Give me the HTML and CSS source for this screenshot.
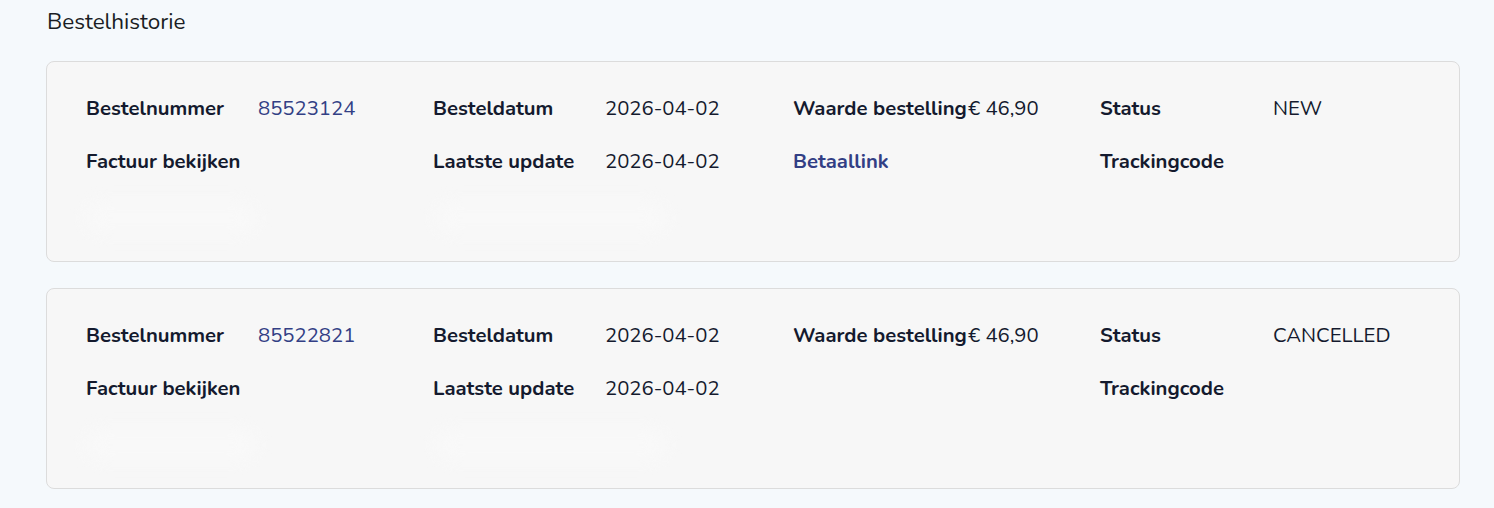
FILE: index.html
```html
<!DOCTYPE html>
<html lang="nl">
<head>
<meta charset="utf-8">
<title>Bestelhistorie</title>
<link rel="stylesheet" href="styles.css">
</head>
<body>
<main class="page">
  <h2 class="title">Bestelhistorie</h2>
  <section class="orders">
    <article class="order">
      <div class="grid">
        <span class="label">Bestelnummer</span>
        <span class="value link">85523124</span>
        <span class="label">Besteldatum</span>
        <span class="value">2026-04-02</span>
        <span class="label">Waarde bestelling</span>
        <span class="value">€ 46,90</span>
        <span class="label">Status</span>
        <span class="value">NEW</span>

        <span class="label">Factuur bekijken</span>
        <span class="value"></span>
        <span class="label">Laatste update</span>
        <span class="value">2026-04-02</span>
        <a class="label link" href="#">Betaallink</a>
        <span class="value"></span>
        <span class="label">Trackingcode</span>
        <span class="value"></span>
      </div>
      <div class="actions"><span class="ghost g1"></span><span class="ghost g2"></span></div>
    </article>
    <article class="order">
      <div class="grid">
        <span class="label">Bestelnummer</span>
        <span class="value link">85522821</span>
        <span class="label">Besteldatum</span>
        <span class="value">2026-04-02</span>
        <span class="label">Waarde bestelling</span>
        <span class="value">€ 46,90</span>
        <span class="label">Status</span>
        <span class="value">CANCELLED</span>

        <span class="label">Factuur bekijken</span>
        <span class="value"></span>
        <span class="label">Laatste update</span>
        <span class="value">2026-04-02</span>
        <span class="label"></span>
        <span class="value"></span>
        <span class="label">Trackingcode</span>
        <span class="value"></span>
      </div>
      <div class="actions"><span class="ghost g1"></span><span class="ghost g2"></span></div>
    </article>
  </section>
</main>
</body>
</html>
```

FILE: styles.css
```css
* { box-sizing: border-box; }
html, body {
  margin: 0;
  padding: 0;
  background: #f5f9fc;
}
body {
  font-family: Nunito, "Lato", "Open Sans", sans-serif;
  color: #111827;
}
.page {
  padding: 7px 34px 0 46px;
}
.title {
  margin: 0 0 0 1px;
  font-size: 22.5px;
  font-weight: 400;
  line-height: 30px;
  color: #1a1d24;
}
.orders {
  margin-top: 24px;
  display: flex;
  flex-direction: column;
  gap: 26px;
}
.order {
  background: #f7f7f7;
  border: 1px solid #dcdcdc;
  border-radius: 8px;
  padding: 33px 39px 20px;
}
.grid {
  display: grid;
  grid-template-columns: 172px 175px 172px 188px 175px 132px 173px auto;
  row-gap: 26px;
}
.label, .value {
  font-size: 20.3px;
  line-height: 27px;
  white-space: nowrap;
}
.label {
  font-weight: 700;
  color: #141a2e;
  text-decoration: none;
}
.value {
  font-weight: 400;
  color: #141a2e;
}
.link {
  color: #333f85;
}
.actions {
  margin-top: 20px;
  height: 46px;
  display: flex;
  align-items: center;
}
.ghost {
  display: block;
  height: 30px;
  border-radius: 15px;
  background: #fafafa;
  filter: blur(8px);
  opacity: 0.6;
}
.g1 { width: 170px; }
.g2 { width: 230px; margin-left: 180px; }
```
